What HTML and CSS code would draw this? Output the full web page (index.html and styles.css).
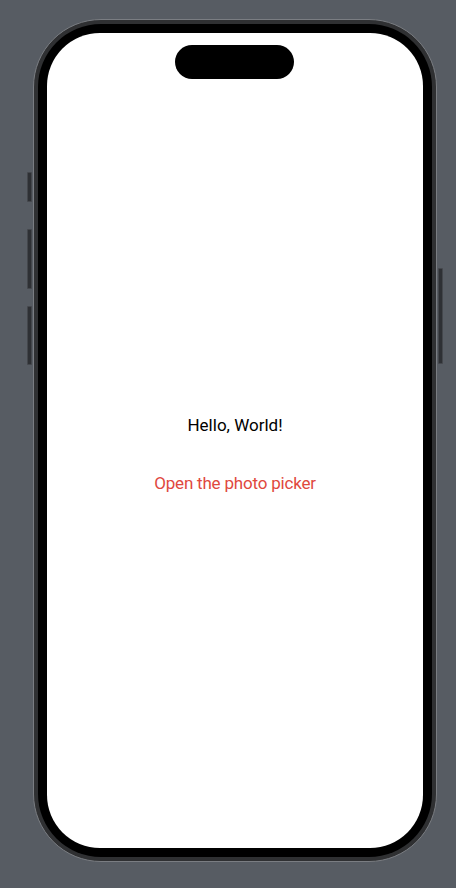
FILE: index.html
```html
<!DOCTYPE html>
<html lang="en">
<head>
<meta charset="utf-8">
<title>Photo picker</title>
<link rel="stylesheet" href="styles.css">
</head>
<body>
  <div class="phone">
    <span class="btn btn-action"></span>
    <span class="btn btn-vol-up"></span>
    <span class="btn btn-vol-down"></span>
    <span class="btn btn-power"></span>
    <div class="bezel">
      <div class="screen">
        <div class="island"></div>
        <div class="content">
          <p class="hello">Hello, World!</p>
          <button class="picker" type="button">Open the photo picker</button>
        </div>
      </div>
    </div>
  </div>
</body>
</html>
```

FILE: styles.css
```css
html, body {
  margin: 0;
  padding: 0;
}
body {
  width: 456px;
  height: 888px;
  background: #575c63;
  font-family: Roboto, "Noto Sans", sans-serif;
  overflow: hidden;
}
.phone {
  position: relative;
  margin: 19px 0 0 33px;
  width: 404px;
  height: 843px;
  box-sizing: border-box;
  padding: 4px;
  border-radius: 68px;
  background: #2f3032;
  border: 1px solid #7a7d82;
}
.btn {
  position: absolute;
  width: 5px;
  background: #2e3034;
  border: 1px solid #44474c;
  box-sizing: border-box;
  border-radius: 1px;
}
.btn-action { left: -7px; top: 152px; height: 30px; }
.btn-vol-up { left: -7px; top: 209px; height: 60px; }
.btn-vol-down { left: -7px; top: 286px; height: 59px; }
.btn-power { right: -7px; top: 248px; height: 96px; }
.bezel {
  height: 100%;
  box-sizing: border-box;
  padding: 9px;
  border-radius: 63px;
  background: #000;
}
.screen {
  position: relative;
  height: 100%;
  box-sizing: border-box;
  border-radius: 53px;
  background: #fff;
  display: flex;
  flex-direction: column;
  padding: 60px 0 34px;
}
.island {
  position: absolute;
  left: 128px;
  top: 12px;
  width: 119px;
  height: 34px;
  border-radius: 17px;
  background: #000;
}
.content {
  flex: 1;
  display: flex;
  flex-direction: column;
  align-items: center;
  justify-content: center;
  gap: 36px;
}
.hello {
  margin: 0;
  font-size: 17px;
  line-height: 22px;
  color: #000;
}
.picker {
  border: 0;
  background: none;
  padding: 0;
  font: inherit;
  font-size: 17px;
  line-height: 22px;
  letter-spacing: -0.2px;
  color: #e0483e;
}
```
